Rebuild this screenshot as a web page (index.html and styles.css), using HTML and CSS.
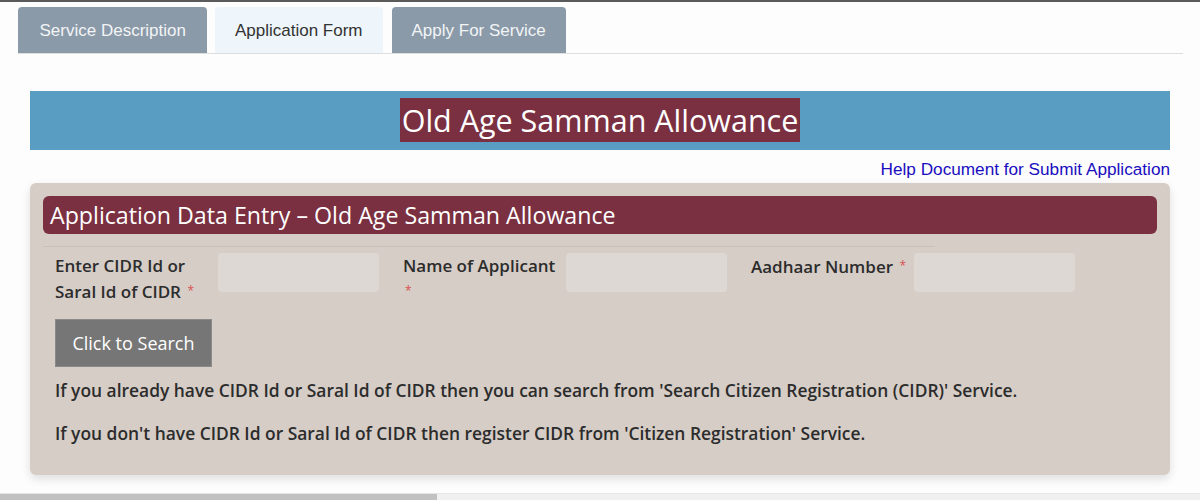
FILE: index.html
```html
<!DOCTYPE html>
<html>
<head>
<meta charset="utf-8">
<link rel="stylesheet" href="styles.css">
</head>
<body>
<div class="page">
  <div class="tabs">
    <div class="tab tab-gray tab-first">Service Description</div>
    <div class="tab tab-active">Application Form</div>
    <div class="tab tab-gray tab-last">Apply For Service</div>
  </div>
  <div class="content">
    <div class="banner"><span class="banner-title">Old Age Samman Allowance</span></div>
    <div class="help"><a href="#" class="help-link">Help Document for Submit Application</a></div>
    <div class="panel">
      <div class="panel-head">Application Data Entry – Old Age Samman Allowance</div>
      <div class="divider"></div>
      <div class="form-row">
        <div class="field">
          <label class="label">Enter CIDR Id or Saral Id of CIDR <span class="req">*</span></label>
          <div class="input"></div>
        </div>
        <div class="field">
          <label class="label">Name of Applicant <span class="req">*</span></label>
          <div class="input"></div>
        </div>
        <div class="field">
          <label class="label">Aadhaar Number <span class="req">*</span></label>
          <div class="input"></div>
        </div>
      </div>
      <button class="btn">Click to Search</button>
      <p class="note">If you already have CIDR Id or Saral Id of CIDR then you can search from 'Search Citizen Registration (CIDR)' Service.</p>
      <p class="note">If you don't have CIDR Id or Saral Id of CIDR then register CIDR from 'Citizen Registration' Service.</p>
    </div>
  </div>
</div>
<div class="scrollbar"><div class="thumb"></div></div>
</body>
</html>
```
FILE: styles.css
```css
html, body {
  margin: 0;
  padding: 0;
}
body {
  background: #fdfdfd;
  border-top: 2px solid #5a5a5a;
  height: 498px;
  overflow: hidden;
  position: relative;
  font-family: "Open Sans", sans-serif;
}
.page {
  padding: 5px 17px 0 18px;
}
.tabs {
  display: flex;
  gap: 8px;
  border-bottom: 1px solid #dedede;
  height: 46px;
}
.tab {
  font-family: "Liberation Sans", Arial, sans-serif;
  font-size: 17px;
  height: 46px;
  box-sizing: border-box;
  padding: 1px 20px 0 20px;
  display: flex;
  align-items: center;
  border-radius: 4px 4px 0 0;
}
.tab-first {
  padding: 1px 21px 0 21.5px;
}
.tab-last {
  margin-left: 1px;
}
.tab-gray {
  background: #8a9aa8;
  color: #f2f4f6;
}
.tab-active {
  background: #eef5fb;
  color: #333;
}
.content {
  margin: 37px 13px 0 12px;
}
.banner {
  background: #5a9dc2;
  height: 59px;
  display: flex;
  justify-content: center;
  align-items: flex-start;
  padding-top: 7px;
  box-sizing: border-box;
}
.banner-title {
  background: #7a3041;
  color: #fff;
  font-size: 30.5px;
  line-height: 44px;
  padding: 0 2px;
  font-family: "Open Sans", sans-serif;
}
.help {
  text-align: right;
  height: 33px;
  line-height: 38px;
}
.help-link {
  font-family: "Liberation Sans", Arial, sans-serif;
  font-size: 17.2px;
  color: #1a0dc0;
  text-decoration: none;
}
.panel {
  background: #d6cdc7;
  border-radius: 6px;
  padding: 13px 13px 30px 13px;
  box-shadow: 0 4px 10px rgba(0,0,0,0.12);
}
.panel-head {
  background: #7a3040;
  color: #fff;
  border-radius: 6px;
  height: 38px;
  line-height: 38px;
  font-size: 23.2px;
  padding-left: 7px;
}
.divider {
  margin-top: 12px;
  width: 892px;
  height: 1px;
  background: #cbc1b9;
}
.form-row {
  display: flex;
  padding: 6px 12px 0 12px;
  gap: 24px;
}
.field {
  display: flex;
  gap: 5px;
  align-items: flex-start;
}
.label {
  width: 158px;
  font-size: 17px;
  color: #2c2c2c;
  font-weight: 600;
  line-height: 25px;
}
.req {
  color: #d85050;
  font-size: 12px;
  font-weight: 400;
  vertical-align: 3px;
  margin-left: 2px;
}
.input {
  width: 161px;
  height: 39px;
  background: #ddd8d3;
  border-radius: 4px;
}
.btn {
  margin: 15px 0 0 12px;
  width: 157px;
  height: 48px;
  background: #767676;
  color: #fff;
  border: 1px solid #8a8a8a;
  font-family: "Open Sans", sans-serif;
  font-size: 18px;
  cursor: pointer;
}
.note {
  margin: 12px 0 0 12px;
  font-size: 17.4px;
  color: #2c2c2c;
  font-weight: 600;
  line-height: 23px;
}
.note + .note {
  margin-top: 20px;
}
.scrollbar {
  position: absolute;
  left: 0;
  right: 0;
  bottom: 0;
  height: 6px;
  background: #f0f0f0;
  border-top: 1px solid #e6e6e6;
}
.thumb {
  width: 437px;
  height: 6px;
  background: #c1c1c1;
}
```
